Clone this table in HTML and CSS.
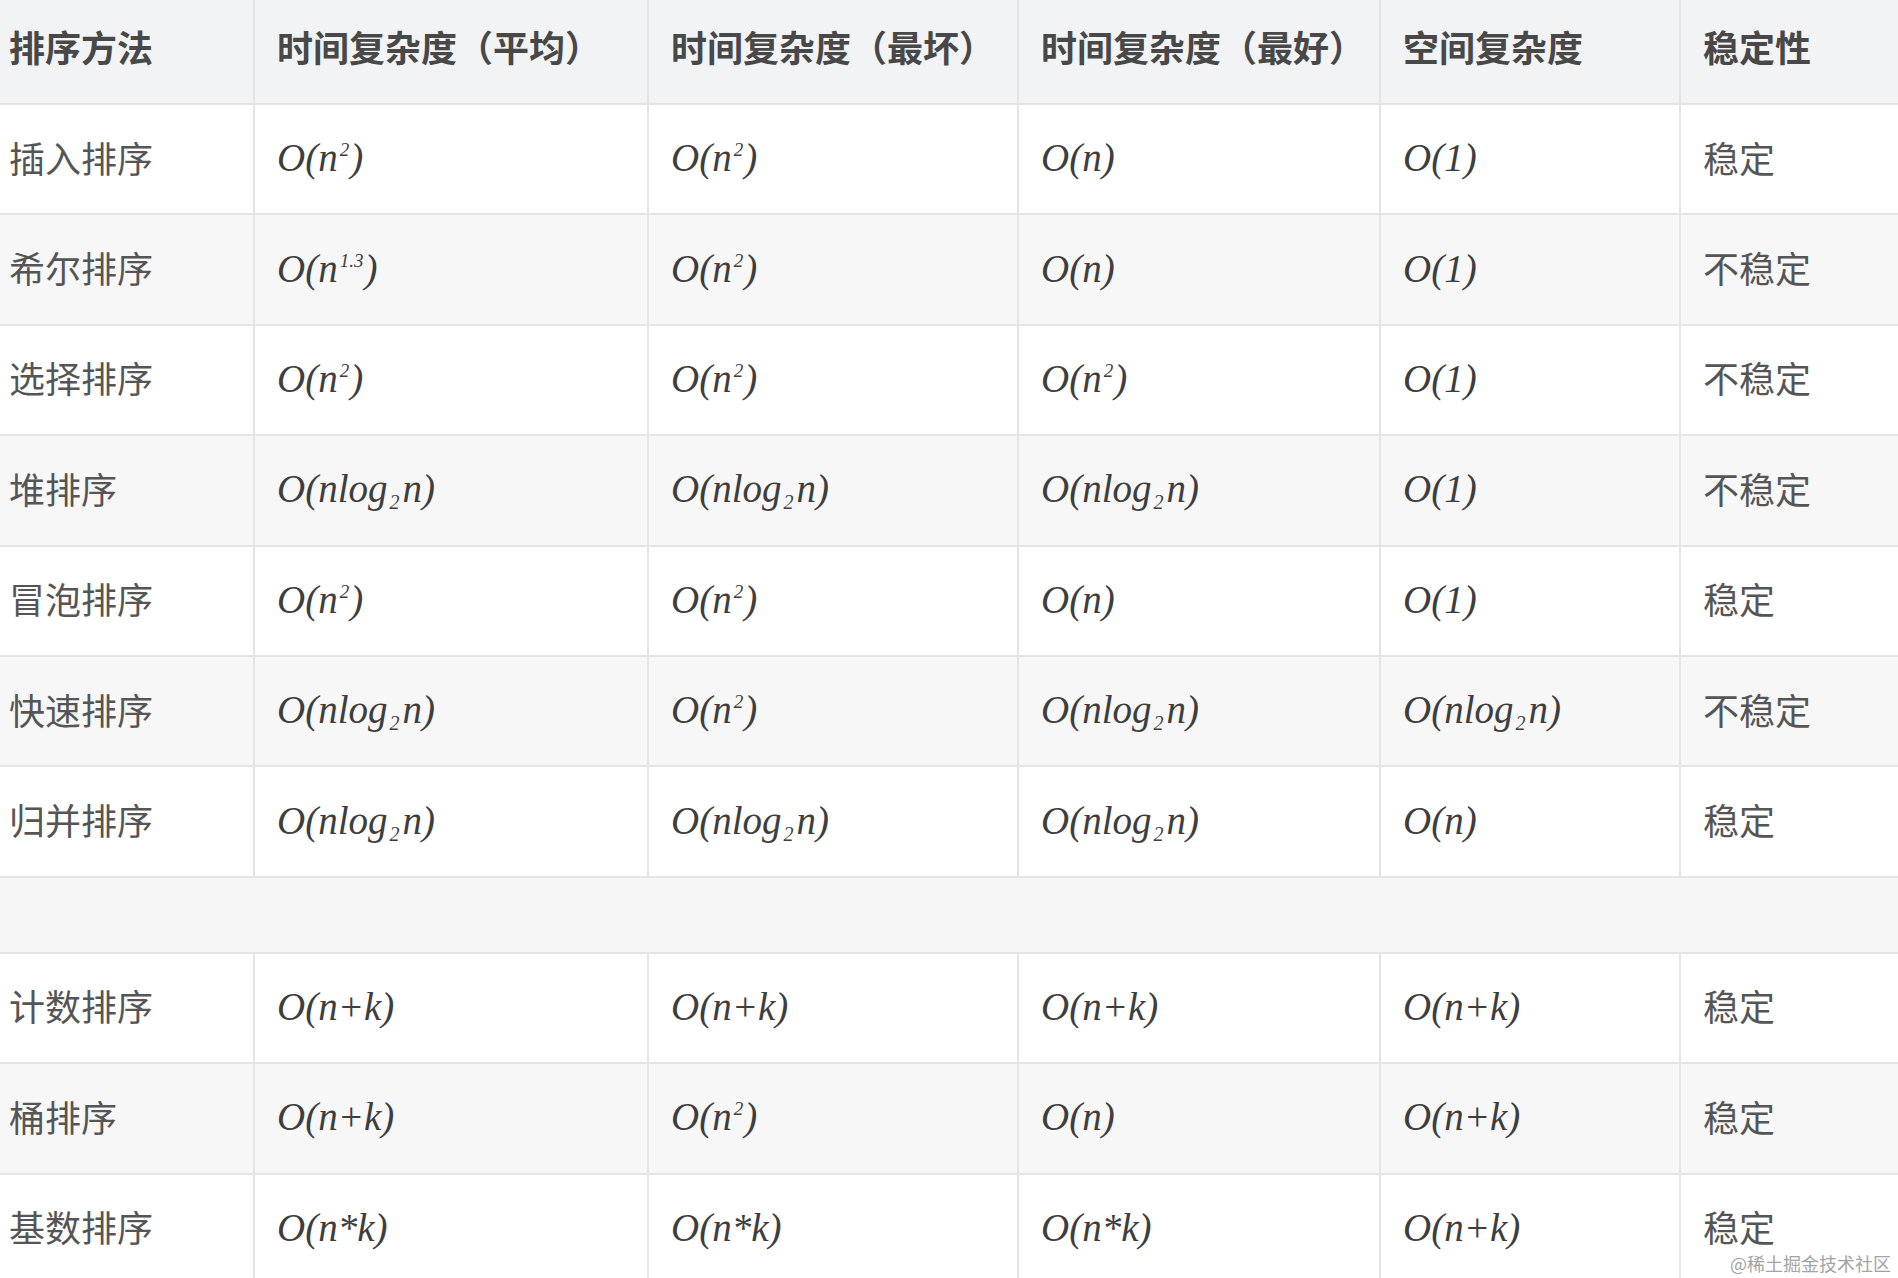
FILE: index.html
```html
<!DOCTYPE html>
<html lang="zh-CN">
<head>
<meta charset="utf-8">
<title>排序算法复杂度</title>
<link rel="stylesheet" href="styles.css">
</head>
<body>
<div class="page">
<table class="sort-table">
<colgroup>
<col class="c1"><col class="c2"><col class="c3"><col class="c4"><col class="c5"><col class="c6">
</colgroup>
<thead>
<tr><th>排序方法</th><th>时间复杂度（平均）</th><th>时间复杂度（最坏）</th><th>时间复杂度（最好）</th><th>空间复杂度</th><th>稳定性</th></tr>
</thead>
<tbody>
<tr><td class="name">插入排序</td><td><span class="m">O(n<sup>2</sup>)</span></td><td><span class="m">O(n<sup>2</sup>)</span></td><td><span class="m">O(n)</span></td><td><span class="m">O(1)</span></td><td>稳定</td></tr>
<tr><td class="name">希尔排序</td><td><span class="m">O(n<sup>1.3</sup>)</span></td><td><span class="m">O(n<sup>2</sup>)</span></td><td><span class="m">O(n)</span></td><td><span class="m">O(1)</span></td><td>不稳定</td></tr>
<tr><td class="name">选择排序</td><td><span class="m">O(n<sup>2</sup>)</span></td><td><span class="m">O(n<sup>2</sup>)</span></td><td><span class="m">O(n<sup>2</sup>)</span></td><td><span class="m">O(1)</span></td><td>不稳定</td></tr>
<tr><td class="name">堆排序</td><td><span class="m">O(nlog<sub>2</sub>n)</span></td><td><span class="m">O(nlog<sub>2</sub>n)</span></td><td><span class="m">O(nlog<sub>2</sub>n)</span></td><td><span class="m">O(1)</span></td><td>不稳定</td></tr>
<tr><td class="name">冒泡排序</td><td><span class="m">O(n<sup>2</sup>)</span></td><td><span class="m">O(n<sup>2</sup>)</span></td><td><span class="m">O(n)</span></td><td><span class="m">O(1)</span></td><td>稳定</td></tr>
<tr><td class="name">快速排序</td><td><span class="m">O(nlog<sub>2</sub>n)</span></td><td><span class="m">O(n<sup>2</sup>)</span></td><td><span class="m">O(nlog<sub>2</sub>n)</span></td><td><span class="m">O(nlog<sub>2</sub>n)</span></td><td>不稳定</td></tr>
<tr><td class="name">归并排序</td><td><span class="m">O(nlog<sub>2</sub>n)</span></td><td><span class="m">O(nlog<sub>2</sub>n)</span></td><td><span class="m">O(nlog<sub>2</sub>n)</span></td><td><span class="m">O(n)</span></td><td>稳定</td></tr>
<tr class="gap"><td colspan="6"></td></tr>
<tr><td class="name">计数排序</td><td><span class="m">O(n+k)</span></td><td><span class="m">O(n+k)</span></td><td><span class="m">O(n+k)</span></td><td><span class="m">O(n+k)</span></td><td>稳定</td></tr>
<tr><td class="name">桶排序</td><td><span class="m">O(n+k)</span></td><td><span class="m">O(n<sup>2</sup>)</span></td><td><span class="m">O(n)</span></td><td><span class="m">O(n+k)</span></td><td>稳定</td></tr>
<tr><td class="name">基数排序</td><td><span class="m">O(n*k)</span></td><td><span class="m">O(n*k)</span></td><td><span class="m">O(n*k)</span></td><td><span class="m">O(n+k)</span></td><td>稳定</td></tr>
</tbody>
</table>
<div class="watermark">@稀土掘金技术社区</div>
</div>
</body>
</html>
```

FILE: styles.css
```css
html, body {
  margin: 0;
  padding: 0;
  overflow: hidden;
  background: #ffffff;
}

.page {
  position: relative;
  width: 1898px;
  height: 1278px;
  overflow: hidden;
}

.sort-table {
  border-collapse: collapse;
  table-layout: fixed;
  width: 1960px;
  font-family: "Noto Sans CJK SC", "Noto Sans", sans-serif;
  font-size: 36px;
  color: #555555;
}

.c1 { width: 254px; }
.c2 { width: 394px; }
.c3 { width: 370px; }
.c4 { width: 362px; }
.c5 { width: 300px; }
.c6 { width: 280px; }

.sort-table th,
.sort-table td {
  border: 2px solid #e4e4e4;
  padding: 0 22px 5px;
  text-align: left;
  vertical-align: middle;
  line-height: 40px;
  white-space: nowrap;
}

.sort-table tr > :first-child {
  border-left: none;
  padding-left: 9px;
}

.sort-table thead th {
  border-top: none;
  height: 91px;
  padding-bottom: 12px;
  background: #f2f3f4;
  color: #484848;
  font-weight: 700;
}

.sort-table tbody td {
  height: 103.4px;
}

.sort-table tbody tr:nth-child(even) td {
  background: #f7f7f7;
}

.sort-table tbody tr.gap td {
  height: 74px;
  padding: 0;
  background: #f6f6f6;
}

.m {
  font-family: "Liberation Serif", "Times New Roman", serif;
  font-style: italic;
  font-size: 39px;
  color: #3e3e3e;
}

.m sup {
  font-size: 19px;
  line-height: 0;
  vertical-align: 15px;
  margin: 0 1px 0 2px;
}

.m sub {
  font-size: 20px;
  line-height: 0;
  vertical-align: -7px;
  margin: 0 3px 0 2px;
}

.watermark {
  position: absolute;
  right: 7px;
  bottom: 5px;
  font-family: "Noto Sans CJK SC", sans-serif;
  font-size: 18px;
  line-height: 20px;
  color: #a3a3a3;
}
```
